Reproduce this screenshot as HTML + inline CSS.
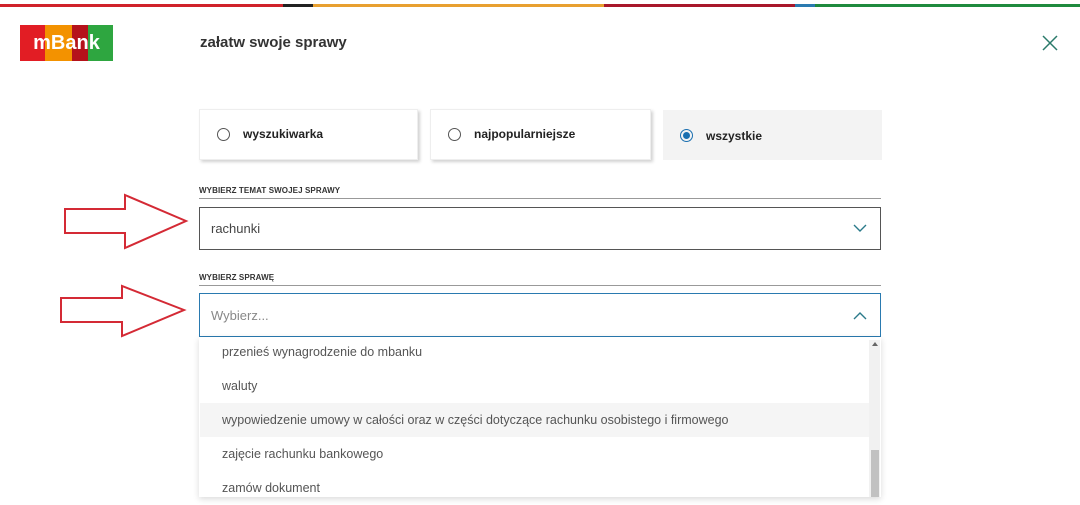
<!DOCTYPE html>
<html><head><meta charset="utf-8"><style>
*{margin:0;padding:0;box-sizing:border-box}
body{width:1080px;height:497px;overflow:hidden;background:#fff;font-family:"Liberation Sans",sans-serif;position:relative;color:#333}
.a{position:absolute}
.bar{top:4px;height:3px}
.tile{position:absolute;top:109px;height:51px;background:#fff;box-shadow:2px 2px 3px rgba(0,0,0,.18);border:1px solid #eee;font-size:12px;font-weight:bold;color:#222}
.tile .r{position:absolute;left:17px;top:18px;width:13px;height:13px;border:1px solid #555;border-radius:50%}
.tile span{position:absolute;left:43px;top:17px}
.lbl{font-size:8px;font-weight:bold;color:#333;letter-spacing:.1px}
.line{height:1px;background:#999}
.item{position:absolute;left:200px;width:669px;height:34px;font-size:12.5px;color:#555;padding-left:22px;line-height:34px}
</style></head><body>
<div class="a bar" style="left:0;width:283px;background:#d0222a"></div>
<div class="a bar" style="left:283px;width:30px;background:#222"></div>
<div class="a bar" style="left:313px;width:291px;background:#e8a030"></div>
<div class="a bar" style="left:604px;width:191px;background:#a8172a"></div>
<div class="a bar" style="left:795px;width:20px;background:#2a7ab0"></div>
<div class="a bar" style="left:815px;width:265px;background:#1f8a3e"></div>

<div class="a" style="left:20px;top:25px;width:93px;height:36px;display:flex">
<div style="width:25px;background:#e21d24"></div><div style="width:27px;background:#f39200"></div><div style="width:16px;background:#b5121b"></div><div style="width:25px;background:#2ea640"></div>
</div>
<div class="a" style="left:20px;top:32px;width:93px;text-align:center;color:#fff;font-weight:bold;font-size:20px;letter-spacing:0">mBank</div>
<div class="a" style="left:200px;top:34px;font-size:15px;font-weight:bold;color:#333">załatw swoje sprawy</div>
<svg class="a" style="left:1042px;top:35px" width="16" height="16"><path d="M1 1L15 15M15 1L1 15" stroke="#2a7a6a" stroke-width="1.5"/></svg>

<div class="tile" style="left:199px;width:219px"><div class="r"></div><span>wyszukiwarka</span></div>
<div class="tile" style="left:430px;width:221px"><div class="r"></div><span>najpopularniejsze</span></div>
<div class="a" style="left:663px;top:110px;width:219px;height:50px;background:#f3f3f3;font-size:12px;font-weight:bold;color:#222">
<div style="position:absolute;left:17px;top:19px;width:13px;height:13px;border:1px solid #1a6fb0;border-radius:50%"><div style="margin:2px;width:7px;height:7px;border-radius:50%;background:#1a6fb0"></div></div>
<span style="position:absolute;left:43px;top:19px">wszystkie</span></div>

<div class="a lbl" style="left:199px;top:186px">WYBIERZ TEMAT SWOJEJ SPRAWY</div>
<div class="a line" style="left:199px;top:198px;width:682px"></div>
<div class="a" style="left:199px;top:207px;width:682px;height:43px;border:1px solid #555"></div>
<div class="a" style="left:211px;top:221px;font-size:13px;color:#444">rachunki</div>
<svg class="a" style="left:853px;top:224px" width="14" height="9"><path d="M1 1L7 7L13 1" stroke="#2a7a8a" stroke-width="1.4" fill="none"/></svg>

<div class="a lbl" style="left:199px;top:273px">WYBIERZ SPRAWĘ</div>
<div class="a line" style="left:199px;top:285px;width:682px"></div>
<div class="a" style="left:199px;top:293px;width:682px;height:44px;border:1px solid #2a7ab0"></div>
<div class="a" style="left:211px;top:308px;font-size:13px;color:#888">Wybierz...</div>
<svg class="a" style="left:853px;top:311px" width="14" height="9"><path d="M1 8L7 2L13 8" stroke="#2a7a8a" stroke-width="1.4" fill="none"/></svg>

<div class="a" style="left:199px;top:337px;width:682px;height:160px;box-shadow:0 2px 6px rgba(0,0,0,.15);background:#fff"></div>
<div class="item" style="top:335px">przenieś wynagrodzenie do mbanku</div>
<div class="item" style="top:369px">waluty</div>
<div class="item" style="top:403px;background:#f5f5f5">wypowiedzenie umowy w całości oraz w części dotyczące rachunku osobistego i firmowego</div>
<div class="item" style="top:437px">zajęcie rachunku bankowego</div>
<div class="item" style="top:471px">zamów dokument</div>
<div class="a" style="left:869px;top:340px;width:11px;height:157px;background:#f1f1f1"></div>
<div class="a" style="left:871px;top:450px;width:8px;height:47px;background:#c1c1c1"></div>
<div class="a" style="left:872px;top:342px;width:0;height:0;border-left:3px solid transparent;border-right:3px solid transparent;border-bottom:4px solid #666"></div>

<svg class="a" style="left:0;top:0" width="200" height="350">
<path d="M65 209H125V195L186 221L125 248V233H65Z" fill="none" stroke="#d42a35" stroke-width="2"/>
<path d="M61 298H122V286L184 310L122 336V322H61Z" fill="none" stroke="#d42a35" stroke-width="2"/>
</svg>
</body></html>
